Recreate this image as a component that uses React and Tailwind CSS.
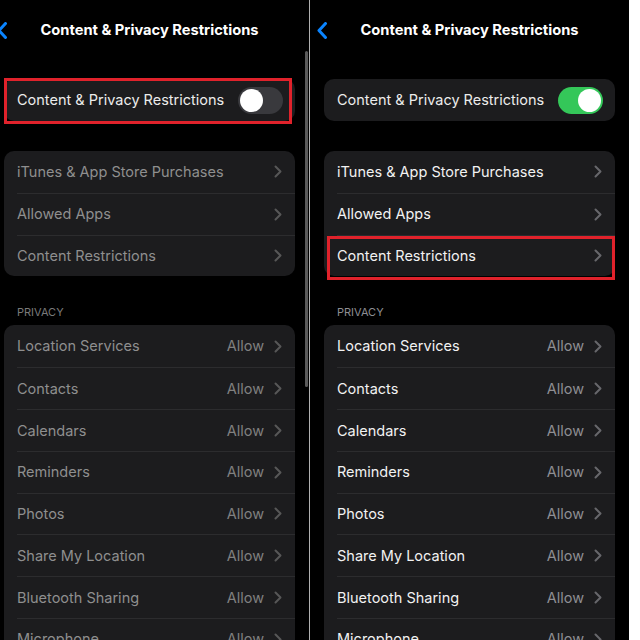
import React from "react";

const topRows = ["iTunes & App Store Purchases", "Allowed Apps", "Content Restrictions"];
const privacyRows = [
  "Location Services",
  "Contacts",
  "Calendars",
  "Reminders",
  "Photos",
  "Share My Location",
  "Bluetooth Sharing",
  "Microphone",
];

function Chevron({ color }) {
  return (
    <svg width="8" height="13" viewBox="0 0 8 13" fill="none">
      <path d="M1.5 1.5l5 5-5 5" stroke={color} strokeWidth="2" strokeLinecap="round" strokeLinejoin="round" />
    </svg>
  );
}

function Toggle({ on }) {
  return (
    <div
      className={`w-[45px] h-[27px] rounded-full p-[2px] flex ${
        on ? "bg-[#34c759] justify-end" : "bg-[#39393d] justify-start"
      }`}
    >
      <div className="w-[23px] h-[23px] rounded-full bg-white" />
    </div>
  );
}

function Row({ label, value, first, enabled }) {
  return (
    <div className="pl-[13px] h-[41.8px]">
      <div
        className={`h-full flex items-center pr-[13px] ${
          first ? "" : "border-t border-[#2c2c2e]"
        }`}
      >
        <span className={`flex-1 ${enabled ? "text-[#f2f2f2]" : "text-[#8f8f8f]"}`}>{label}</span>
        {value && (
          <span className={`mr-[10px] ${enabled ? "text-[#8e8e93]" : "text-[#808080]"}`}>{value}</span>
        )}
        <Chevron color={enabled ? "#67676b" : "#575757"} />
      </div>
    </div>
  );
}

function Panel({ enabled }) {
  return (
    <div className="w-[319px] h-[640px] bg-black relative overflow-hidden text-[14.5px] font-['Inter','Liberation_Sans',sans-serif]">
      {/* header */}
      <div className="h-[60px] flex items-center justify-center relative">
        <svg className="absolute left-[7px] top-[22px]" width="11" height="17" viewBox="0 0 11 17" fill="none">
          <path d="M8.5 1.5L2 8.5l6.5 7" stroke="#0a84ff" strokeWidth="3" strokeLinecap="round" strokeLinejoin="round" />
        </svg>
        <h1 className="text-white font-bold text-[14.7px]">Content &amp; Privacy Restrictions</h1>
      </div>

      {/* main toggle */}
      <div className="mt-[19px] mx-[14px] h-[42px] rounded-[10px] bg-[#1c1c1e] flex items-center pl-[13px] pr-[12px]">
        <span className="flex-1 text-[#ececec]">Content &amp; Privacy Restrictions</span>
        <Toggle on={enabled} />
      </div>

      {/* store / apps / content */}
      <div className="mt-[30px] mx-[14px] rounded-[10px] bg-[#1c1c1e] overflow-hidden">
        {topRows.map((r, i) => (
          <Row key={r} label={r} first={i === 0} enabled={enabled} />
        ))}
      </div>

      <div
        className={`mt-[29px] ml-[27px] h-[14px] leading-[14px] text-[11px] ${
          enabled ? "text-[#8e8e93]" : "text-[#7a7a7a]"
        }`}
      >
        PRIVACY
      </div>

      <div className="mt-[6px] mx-[14px] rounded-[10px] bg-[#1c1c1e] overflow-hidden">
        {privacyRows.map((r, i) => (
          <Row key={r} label={r} value="Allow" first={i === 0} enabled={enabled} />
        ))}
      </div>

      {/* highlight boxes */}
      {enabled ? (
        <div className="absolute left-[17px] top-[236px] w-[288px] h-[44px] border-[3px] border-[#e0222b]" />
      ) : (
        <div className="absolute left-[14px] top-[78px] w-[288px] h-[46px] border-[3px] border-[#e0222b]" />
      )}

      {/* scroll indicator */}
      {!enabled && <div className="absolute left-[315px] top-[51px] w-[3px] h-[336px] rounded-full bg-[#5a5a5a]" />}
    </div>
  );
}

export default function App() {
  return (
    <div className="w-[640px] h-[640px] flex bg-white overflow-hidden">
      <div className="w-[309px] h-full overflow-hidden bg-black shrink-0">
        <div className="-ml-[10px]">
          <Panel enabled={false} />
        </div>
      </div>
      <div className="w-px h-full bg-[#b0b0b0] shrink-0" />
      <div className="shrink-0">
        <Panel enabled />
      </div>
      <div className="flex-1 bg-white" />
    </div>
  );
}
